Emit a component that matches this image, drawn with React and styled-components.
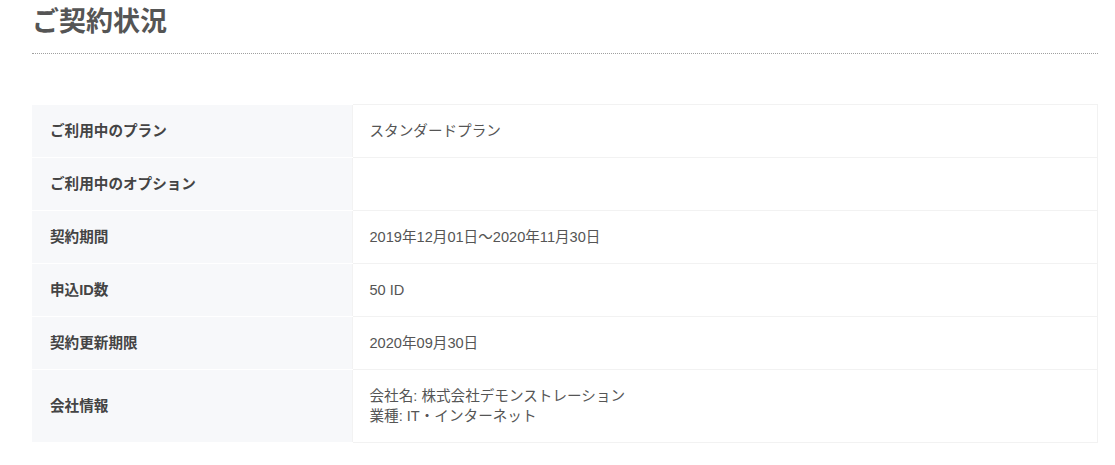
import React from "react";
import styled, { createGlobalStyle } from "styled-components";

const GlobalStyle = createGlobalStyle`
  body {
    margin: 0;
    background: #fff;
    font-family: "Liberation Sans", "Noto Sans CJK JP", sans-serif;
  }
`;

const Page = styled.div`
  padding: 0 17px 0 32px;
`;

const Title = styled.h1`
  margin: 0;
  padding: 4px 0 13px;
  font-size: 27px;
  line-height: 36px;
  font-weight: bold;
  color: #555;
  border-bottom: 1px dotted #a0a0a0;
`;

const Table = styled.table`
  width: 100%;
  margin-top: 50px;
  border-collapse: collapse;
  font-size: 14.6px;
  line-height: 20px;
`;

const Label = styled.th`
  width: 320px;
  box-sizing: border-box;
  padding: 16px 18px;
  text-align: left;
  font-weight: bold;
  color: #444;
  background: #f7f8fa;
  border-top: 1px solid #fff;
  border-bottom: 1px solid #fff;
`;

const Value = styled.td`
  padding: 16px 17px;
  color: #555;
  border: 1px solid #f2f2f2;
`;

const rows = [
  ["ご利用中のプラン", ["スタンダードプラン"]],
  ["ご利用中のオプション", []],
  ["契約期間", ["2019年12月01日～2020年11月30日"]],
  ["申込ID数", ["50 ID"]],
  ["契約更新期限", ["2020年09月30日"]],
  ["会社情報", ["会社名: 株式会社デモンストレーション", "業種: IT・インターネット"]],
];

export default function App() {
  return (
    <>
      <GlobalStyle />
      <Page>
        <Title>ご契約状況</Title>
        <Table>
          <tbody>
            {rows.map(([label, lines]) => (
              <tr key={label}>
                <Label>{label}</Label>
                <Value>
                  {lines.length === 0
                    ? "\u00a0"
                    : lines.map((l, i) => <div key={i}>{l}</div>)}
                </Value>
              </tr>
            ))}
          </tbody>
        </Table>
      </Page>
    </>
  );
}
